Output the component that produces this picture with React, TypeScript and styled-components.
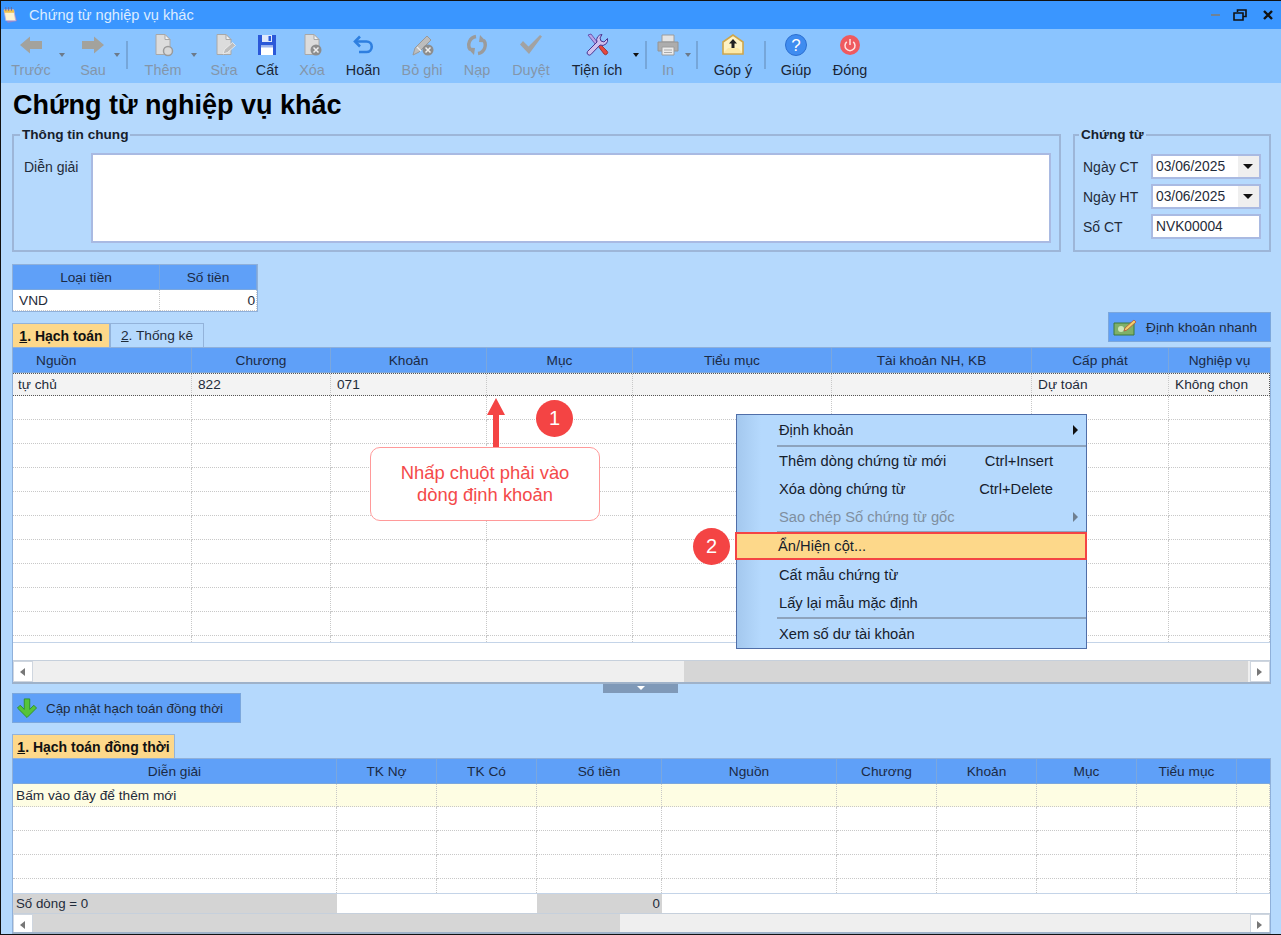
import { ReactNode } from "react";
import styled, { createGlobalStyle } from "styled-components";

const Global = createGlobalStyle`
  html, body { margin: 0; padding: 0; background: #fff; }
  body { font-family: "Liberation Sans", Arial, sans-serif; font-size: 14px; color: #1f2b3a; }
`;

const Window = styled.div`
  position: relative;
  width: 1281px;
  height: 935px;
  box-sizing: border-box;
  border-top: 1px solid #111;
  border-left: 1px solid #111;
  border-bottom: 1px solid #111;
  display: flex;
  flex-direction: column;
  overflow: hidden;
  background: #b5d9fd;
`;

const TitleBar = styled.div`
  height: 28px;
  background: #3a96ff;
  display: flex;
  align-items: center;
  padding: 0 0 0 2px;
  flex: none;
`;

const TitleText = styled.span`
  margin-left: 11px;
  color: #dcecff;
  font-size: 14.6px;
`;

const WinControls = styled.div`
  margin-left: auto;
  display: flex;
  align-items: center;
  margin-right: 8px;
  gap: 13px;
  svg:last-child { margin-left: 3px; }
`;

const Toolbar = styled.div`
  height: 54px;
  flex: none;
  background: #8ac4ff;
  display: flex;
  padding-left: 6px;
`;

const ToolItem = styled.div<{ $w: number; $ml?: number; $off?: boolean }>`
  width: ${(p) => p.$w}px;
  margin-left: ${(p) => p.$ml || 0}px;
  flex: none;
  display: flex;
  flex-direction: column;
  align-items: center;
  padding-top: 4px;
  color: ${(p) => (p.$off ? "#8496aa" : "#1a2636")};
  white-space: nowrap;
  font-size: 14.4px;
  svg { display: block; }
`;

const ToolLabel = styled.span`
  margin-top: 5px;
  line-height: 16px;
`;

const Caret = styled.div<{ $w: number; $ml?: number; $off?: boolean }>`
  width: ${(p) => p.$w}px;
  margin-left: ${(p) => p.$ml || 0}px;
  flex: none;
  position: relative;
  &::after {
    content: "";
    position: absolute;
    left: 50%;
    top: 24px;
    margin-left: -3px;
    border-left: 3.5px solid transparent;
    border-right: 3.5px solid transparent;
    border-top: 4px solid ${(p) => (p.$off ? "#6c7a8a" : "#111")};
  }
`;

const ToolSep = styled.div<{ $w: number }>`
  width: ${(p) => p.$w}px;
  flex: none;
  display: flex;
  justify-content: center;
  padding-top: 12px;
  &::after {
    content: "";
    width: 2px;
    height: 28px;
    background: #76a6d9;
  }
`;

const Content = styled.div`
  flex: 1;
  min-height: 0;
  display: flex;
  flex-direction: column;
  padding: 0 10px 0 11px;
`;

const Heading = styled.h1`
  margin: 0;
  height: 44px;
  line-height: 44px;
  font-size: 27px;
  font-weight: 700;
  color: #000;
  padding-left: 1px;
  white-space: nowrap;
`;

const GroupRow = styled.div`
  display: flex;
  gap: 12px;
  height: 125px;
  flex: none;
`;

const Group = styled.fieldset<{ $w: number; $lg: number }>`
  width: ${(p) => p.$w}px;
  box-sizing: border-box;
  margin: 0;
  padding: 0;
  border: 2px solid #9db6d8;
  flex: none;
  legend {
    margin-left: ${(p) => p.$lg}px;
    padding: 0 2px;
    font-weight: 700;
    font-size: 13.6px;
    line-height: 16px;
    color: #16202c;
  }
`;

const GeneralBody = styled.div`
  display: flex;
  padding: 10px 8px 0 10px;
`;

const FieldLabel = styled.span`
  width: 67px;
  flex: none;
  line-height: 28px;
`;

const Memo = styled.div`
  flex: 1;
  height: 90px;
  box-sizing: border-box;
  background: #fff;
  border: 2px solid #a9bae2;
`;

const VoucherBody = styled.div`
  display: grid;
  grid-template-columns: 68px 110px;
  row-gap: 5px;
  padding: 11px 0 0 8px;
  align-items: center;
`;

const FieldBox = styled.div`
  height: 25px;
  box-sizing: border-box;
  background: #fff;
  border: 2px solid #a9bae2;
  display: flex;
  align-items: center;
  padding-left: 3px;
  font-size: 13.8px;
  span { flex: 1; }
`;

const DropZone = styled.div`
  width: 21px;
  align-self: stretch;
  background: #efefef;
  position: relative;
  &::after {
    content: "";
    position: absolute;
    left: 5px;
    top: 8px;
    border-left: 5px solid transparent;
    border-right: 5px solid transparent;
    border-top: 5px solid #111;
  }
`;

const MoneyGrid = styled.div`
  margin-top: 12px;
  width: 246px;
  height: 48px;
  flex: none;
  box-sizing: border-box;
  border: 1px solid #8fb0da;
  background: #fff;
  display: grid;
  grid-template-columns: 147px 1fr;
  grid-template-rows: 25px 1fr;
  font-size: 13.7px;
`;

const HeadCell = styled.div<{ $pad?: number }>`
  background: #5fa0f8;
  border-right: 1px solid #7ba7dd;
  border-bottom: 1px solid #7ba7dd;
  display: flex;
  align-items: center;
  justify-content: ${(p) => (p.$pad ? "flex-start" : "center")};
  padding-left: ${(p) => p.$pad || 0}px;
  box-sizing: border-box;
  color: #1b2a45;
  white-space: nowrap;
  overflow: hidden;
`;

const Cell = styled.div<{ $right?: boolean; $pad?: number }>`
  border-right: 1px dotted #c8c8c8;
  border-bottom: 1px dotted #c8c8c8;
  box-sizing: border-box;
  padding: 0 ${(p) => (p.$right ? 1 : 0)}px 0 ${(p) => (p.$right ? 0 : p.$pad ?? 6)}px;
  display: flex;
  align-items: center;
  justify-content: ${(p) => (p.$right ? "flex-end" : "flex-start")};
  white-space: nowrap;
  overflow: hidden;
`;

const TabRow = styled.div<{ $h: number }>`
  height: ${(p) => p.$h}px;
  flex: none;
  display: flex;
  justify-content: space-between;
  align-items: flex-start;
  position: relative;
`;

const Tabs = styled.div`
  display: flex;
  align-self: flex-end;
`;

const Tab = styled.div<{ $active?: boolean; $w: number }>`
  width: ${(p) => p.$w}px;
  height: 24px;
  box-sizing: border-box;
  display: flex;
  align-items: center;
  justify-content: center;
  white-space: nowrap;
  font-size: ${(p) => (p.$active ? "14px" : "13.7px")};
  font-weight: ${(p) => (p.$active ? 700 : 400)};
  color: ${(p) => (p.$active ? "#111" : "#1f2b3a")};
  background: ${(p) => (p.$active ? "#fdd88a" : "#b5d9fd")};
  border: 1px solid #93b3da;
  border-bottom: none;
`;

const ActionButton = styled.div<{ $w: number; $fs: number }>`
  width: ${(p) => p.$w}px;
  height: 30px;
  box-sizing: border-box;
  background: #5fa0f8;
  border: 1px solid #7ba7dd;
  display: flex;
  align-items: center;
  padding-left: 4px;
  gap: 9px;
  white-space: nowrap;
  flex: none;
  font-size: ${(p) => p.$fs}px;
`;

const GridBox = styled.div<{ $fill?: boolean }>`
  ${(p) => (p.$fill ? "flex: 1; min-height: 0;" : "height: 337px; flex: none;")}
  box-sizing: border-box;
  border: 1px solid #8fb0da;
  border-bottom: 2px solid #9fb2c9;
  background: #fff;
  display: flex;
  flex-direction: column;
  overflow: hidden;
  font-size: 13.7px;
`;

const Columns = styled.div<{ $cols: string }>`
  display: grid;
  grid-template-columns: ${(p) => p.$cols};
  flex: none;
`;

const HeadRow = styled(Columns)`
  height: 25px;
  ${HeadCell}:last-child { border-right: none; }
`;

const Rows = styled.div<{ $h: number }>`
  height: ${(p) => p.$h}px;
  flex: none;
  overflow: hidden;
  border-bottom: 1px solid #c4d4e8;
  box-sizing: content-box;
`;

const DataRow = styled(Columns)<{ $h: number; $bg?: string; $focus?: boolean }>`
  height: ${(p) => p.$h}px;
  background: ${(p) => p.$bg || "#fff"};
  ${(p) => p.$focus && "border: 1px dotted #555; border-left: none; box-sizing: border-box;"}
  ${Cell} { ${(p) => p.$focus && "border-bottom: none;"} }
  ${Cell}:last-child { ${(p) => p.$focus && "border-right: none;"} }
`;

const Gap = styled.div`
  flex: 1;
  min-height: 0;
  background: #fff;
`;

const Scrollbar = styled.div<{ $h: number }>`
  height: ${(p) => p.$h}px;
  flex: none;
  display: flex;
  background: #efefef;
  border-top: 1px solid #c6d0dc;
`;

const ScrollButton = styled.div<{ $right?: boolean }>`
  width: 20px;
  flex: none;
  background: #fff;
  border: 1px solid #cfd6df;
  box-sizing: border-box;
  position: relative;
  &::after {
    content: "";
    position: absolute;
    top: 6px;
    left: 6px;
    border-top: 4px solid transparent;
    border-bottom: 4px solid transparent;
    ${(p) => (p.$right ? "border-left: 5px solid #777;" : "border-right: 5px solid #777;")}
  }
`;

const ScrollSpace = styled.div<{ $w: number; $thumb?: boolean }>`
  ${(p) => (p.$w ? `width: ${p.$w}px; flex: none;` : "flex: 1;")}
  background: ${(p) => (p.$thumb ? "#d6d6d6" : "#efefef")};
`;

const Splitter = styled.div`
  height: 9px;
  flex: none;
  display: flex;
  justify-content: center;
`;

const SplitHandle = styled.div`
  width: 75px;
  height: 9px;
  margin-right: 2px;
  background: #7f99b8;
  position: relative;
  &::after {
    content: "";
    position: absolute;
    left: 34px;
    top: 2px;
    border-left: 4px solid transparent;
    border-right: 4px solid transparent;
    border-top: 4px solid #fff;
  }
`;

const FooterRow = styled(Columns)`
  height: 19px;
  font-size: 13.3px;
`;

const FootCell = styled.div<{ $gray?: boolean; $right?: boolean }>`
  background: ${(p) => (p.$gray ? "#d4d4d4" : "#fff")};
  display: flex;
  align-items: center;
  justify-content: ${(p) => (p.$right ? "flex-end" : "flex-start")};
  padding: 0 2px 0 3px;
`;

const Menu = styled.div`
  position: absolute;
  left: 735px;
  top: 413px;
  width: 351px;
  box-sizing: border-box;
  border: 1px solid #506ea8;
  background: linear-gradient(90deg, #a4c8ee, #b5d9fd 24px);
  color: #16202c;
  font-size: 14.7px;
  display: flex;
  flex-direction: column;
`;

const MenuItem = styled.div<{ $h: number; $off?: boolean; $hot?: boolean }>`
  height: ${(p) => p.$h}px;
  flex: none;
  display: flex;
  align-items: center;
  padding: 0 33px 0 42px;
  color: ${(p) => (p.$off ? "#7f8fa0" : "inherit")};
  position: relative;
  ${(p) => p.$hot && "background: #fdd88a; outline: 2px solid #f44444; outline-offset: -1px; margin: 0 0 2px -1px;"}
  b { margin-left: auto; font-weight: 400; }
`;

const MenuArrow = styled.i<{ $off?: boolean }>`
  position: absolute;
  right: 8px;
  top: 50%;
  margin-top: -5px;
  border-top: 5px solid transparent;
  border-bottom: 5px solid transparent;
  border-left: 5px solid ${(p) => (p.$off ? "#6f7f90" : "#111")};
`;

const MenuSep = styled.div`
  height: 2px;
  flex: none;
  margin-left: 40px;
  background: #8da3bd;
`;

const Badge = styled.div<{ $x: number; $y: number }>`
  position: absolute;
  left: ${(p) => p.$x}px;
  top: ${(p) => p.$y}px;
  width: 37px;
  height: 37px;
  border-radius: 50%;
  background: #f44444;
  color: #fff;
  font-size: 20px;
  display: flex;
  align-items: center;
  justify-content: center;
`;

const Callout = styled.div`
  position: absolute;
  left: 369px;
  top: 446px;
  width: 230px;
  height: 74px;
  box-sizing: border-box;
  background: #fff;
  border: 1px solid #ff9a9a;
  border-radius: 10px;
  color: #f44a4a;
  font-size: 18.4px;
  line-height: 22px;
  text-align: center;
  padding-top: 14px;
`;

const UpArrow = styled.svg`
  position: absolute;
  left: 485px;
  top: 396px;
`;

const Doc = () => (
  <>
    <path d="M5 1.5h9l5 5v15H5z" fill="#dcdcdc" stroke="#a8a8a8" />
    <path d="M14 1.5v5h5z" fill="#f2f2f2" stroke="#a8a8a8" />
  </>
);

const CrossCircle = ({ cx, cy }: { cx: number; cy: number }) => (
  <>
    <circle cx={cx} cy={cy} r="5.5" fill="#8d8d8d" />
    <path d={`M${cx - 2.5} ${cy - 2.5}l5 5m0-5l-5 5`} stroke="#eee" strokeWidth="1.5" />
  </>
);

const icons: Record<string, ReactNode> = {
  prev: <path d="M1 12l10-8.5V8h12v8H11v4.5z" fill="#a3a29c" />,
  next: <path d="M23 12l-10-8.5V8H1v8h12v4.5z" fill="#a3a29c" />,
  add: (
    <>
      <Doc />
      <circle cx="17" cy="18" r="4.5" fill="#d8d8d8" stroke="#9a9a9a" strokeWidth="1.5" />
    </>
  ),
  edit: (
    <>
      <Doc />
      <path d="M11 21l1.5-4.5 8-7 3 3-8 7z" fill="#bdbdbd" stroke="#f0f0f0" strokeWidth=".8" />
    </>
  ),
  save: (
    <>
      <path d="M3 2h18v20H3z" fill="#2b58d8" />
      <path d="M7 2h10v7H7z" fill="#dfe9fb" />
      <path d="M13.5 3h2.5v5h-2.5z" fill="#2b58d8" />
      <path d="M6 12.5h12V22H6z" fill="#fff" />
      <path d="M6 12.5h12v2H6z" fill="#9db5ee" />
    </>
  ),
  del: (
    <>
      <Doc />
      <CrossCircle cx={16} cy={17} />
    </>
  ),
  undo: (
    <>
      <path d="M9 3.5L4 8.5l5 5" fill="none" stroke="#2e7fe0" strokeWidth="2.6" />
      <path d="M5 8.5h10.5a5.2 5.2 0 0 1 0 10.5H8" fill="none" stroke="#2e7fe0" strokeWidth="2.6" />
    </>
  ),
  discard: (
    <>
      <path d="M3 22l2-7L17 3l4 4L9 19z" fill="#bdbdbd" stroke="#999" />
      <path d="M7 14l4 4" stroke="#eee" strokeWidth="1.2" />
      <CrossCircle cx={18} cy={17} />
    </>
  ),
  reload: (
    <>
      <path d="M11 3.5A8.5 8.5 0 0 0 5.5 17" fill="none" stroke="#9b9b9b" strokeWidth="3.4" />
      <path d="M13 20.5A8.5 8.5 0 0 0 18.5 7" fill="none" stroke="#9b9b9b" strokeWidth="3.4" />
      <path d="M2 14.5l8 .5-1 7zM22 9.5l-8-.5 1-7z" fill="#9b9b9b" />
    </>
  ),
  check: <path d="M1 11.5l3-3.5 5.5 5.5L21 2l2 1.5L10 21z" fill="#a2a2a2" />,
  tools: (
    <>
      <path d="M3 2l3-1 7 9-2 2z" fill="#b9a3e6" stroke="#5c3fa0" strokeWidth=".8" />
      <path d="M13 13l2-2 7 7a2 2 0 0 1-3 3z" fill="#e5483f" stroke="#8f2a2a" strokeWidth=".8" />
      <path d="M17 1.5a5.5 5.5 0 0 0-5 7.5L2.5 18.5a2.3 2.3 0 0 0 3.2 3.2L15 12a5.5 5.5 0 0 0 7.5-6.5L19 9l-3-1-1-3z" fill="#cfc0ee" stroke="#4a3490" strokeWidth="1" />
    </>
  ),
  print: (
    <>
      <path d="M6 2h12v7H6z" fill="#e4e4e4" stroke="#9c9c9c" />
      <path d="M2 9h20v9H2z" fill="#adadad" stroke="#949494" />
      <path d="M6 14h12v8H6z" fill="#ececec" stroke="#9c9c9c" />
      <path d="M8 17h8M8 19.5h8" stroke="#aaa" />
    </>
  ),
  feedback: (
    <>
      <path d="M2 9l10-7 10 7v12H2z" fill="#fff3c4" stroke="#cfa64a" strokeWidth="1.6" />
      <path d="M3 20h18V19l-4-4H7l-4 4z" fill="#fde9a6" />
      <path d="M12 6l-4 4.5h2.5V15h3v-4.5H16z" fill="#222" />
    </>
  ),
  help: (
    <>
      <circle cx="12" cy="12" r="10.5" fill="#3f8cf0" stroke="#2c6fd0" />
      <text x="12" y="18" textAnchor="middle" fontSize="17" fill="#fff" fontFamily="Liberation Sans">?</text>
    </>
  ),
  power: (
    <>
      <circle cx="12" cy="12" r="10" fill="#ef5a5f" />
      <path d="M8.8 8.8a5 5 0 1 0 6.4 0" fill="none" stroke="#ffe3e3" strokeWidth="1.5" />
      <path d="M12 6v6" stroke="#ffe3e3" strokeWidth="1.5" />
    </>
  ),
};

const ToolIcon = ({ name }: { name: string }) => (
  <svg width="24" height="24" viewBox="0 0 24 24">
    {icons[name]}
  </svg>
);

type Part =
  | { kind: "tool"; label: string; icon: string; w: number; ml?: number; off?: boolean }
  | { kind: "caret"; w: number; ml?: number; off?: boolean }
  | { kind: "sep"; w: number };

const parts: Part[] = [
  { kind: "tool", label: "Trước", icon: "prev", w: 48, off: true },
  { kind: "caret", w: 10, ml: 2, off: true },
  { kind: "tool", label: "Sau", icon: "next", w: 40, ml: 6, off: true },
  { kind: "caret", w: 8, off: true },
  { kind: "sep", w: 12 },
  { kind: "tool", label: "Thêm", icon: "add", w: 52, ml: 4, off: true },
  { kind: "caret", w: 10, off: true },
  { kind: "tool", label: "Sửa", icon: "edit", w: 48, ml: 1, off: true },
  { kind: "tool", label: "Cất", icon: "save", w: 38 },
  { kind: "tool", label: "Xóa", icon: "del", w: 52, off: true },
  { kind: "tool", label: "Hoãn", icon: "undo", w: 50 },
  { kind: "tool", label: "Bỏ ghi", icon: "discard", w: 68, off: true },
  { kind: "tool", label: "Nạp", icon: "reload", w: 42, off: true },
  { kind: "tool", label: "Duyệt", icon: "check", w: 66, off: true },
  { kind: "tool", label: "Tiện ích", icon: "tools", w: 66 },
  { kind: "caret", w: 12 },
  { kind: "sep", w: 8 },
  { kind: "tool", label: "In", icon: "print", w: 32, ml: 2, off: true },
  { kind: "caret", w: 8, off: true },
  { kind: "sep", w: 10 },
  { kind: "tool", label: "Góp ý", icon: "feedback", w: 62 },
  { kind: "sep", w: 2 },
  { kind: "tool", label: "Giúp", icon: "help", w: 60 },
  { kind: "tool", label: "Đóng", icon: "power", w: 48 },
];

const topCols = "179px 139px 156px 146px 199px 200px 137px 101px";
const topHeads = ["Nguồn", "Chương", "Khoản", "Mục", "Tiểu mục", "Tài khoản NH, KB", "Cấp phát", "Nghiệp vụ"];
const topRow = ["tự chủ", "822", "071", "", "", "", "Dự toán", "Không chọn"];

const lowCols = "324px 100px 100px 125px 175px 100px 100px 100px 100px 33px";
const lowHeads = ["Diễn giải", "TK Nợ", "TK Có", "Số tiền", "Nguồn", "Chương", "Khoản", "Mục", "Tiểu mục", ""];

const blank = (n: number) => Array.from({ length: n }, (_, i) => i);

const App = () => {
  return (
    <Window>
      <Global />
      <TitleBar>
        <svg width="15" height="18" viewBox="0 0 16 19">
          <path d="M1 5l10-2 4 13-10 2z" fill="#8f86cf" />
          <path d="M1 4h10.5l2 11.5H3z" fill="#fbf3d0" stroke="#b7aee0" strokeWidth=".8" />
          <path d="M1 4h10.5l.5 3H1.5z" fill="#edc14f" />
          <path d="M3 1v4M6 1v4M9 1v4" stroke="#6a6a9a" />
        </svg>
        <TitleText>Chứng từ nghiệp vụ khác</TitleText>
        <WinControls>
          <svg width="9" height="4" viewBox="0 0 9 4">
            <path d="M0 1h9v2H0z" fill="#6e8296" />
          </svg>
          <svg width="14" height="12" viewBox="0 0 14 12">
            <path d="M4.5 3V1h8.5v6.5h-3" fill="none" stroke="#111" strokeWidth="1.6" />
            <path d="M1 4h9v7H1z" fill="none" stroke="#111" strokeWidth="1.6" />
          </svg>
          <svg width="10" height="10" viewBox="0 0 10 10">
            <path d="M1 1l8 8m0-8l-8 8" stroke="#111" strokeWidth="2.4" />
          </svg>
        </WinControls>
      </TitleBar>
      <Toolbar>
        {parts.map((p, i) => {
          if (p.kind === "caret") return <Caret key={i} $w={p.w} $ml={p.ml} $off={p.off} />;
          if (p.kind === "sep") return <ToolSep key={i} $w={p.w} />;
          return (
            <ToolItem key={i} $w={p.w} $ml={p.ml} $off={p.off}>
              <ToolIcon name={p.icon} />
              <ToolLabel>{p.label}</ToolLabel>
            </ToolItem>
          );
        })}
      </Toolbar>
      <Content>
        <Heading>Chứng từ nghiệp vụ khác</Heading>
        <GroupRow>
          <Group $w={1049} $lg={6}>
            <legend>Thông tin chung</legend>
            <GeneralBody>
              <FieldLabel>Diễn giải</FieldLabel>
              <Memo />
            </GeneralBody>
          </Group>
          <Group $w={198} $lg={4}>
            <legend>Chứng từ</legend>
            <VoucherBody>
              <span>Ngày CT</span>
              <FieldBox>
                <span>03/06/2025</span>
                <DropZone />
              </FieldBox>
              <span>Ngày HT</span>
              <FieldBox>
                <span>03/06/2025</span>
                <DropZone />
              </FieldBox>
              <span>Số CT</span>
              <FieldBox>
                <span>NVK00004</span>
              </FieldBox>
            </VoucherBody>
          </Group>
        </GroupRow>
        <MoneyGrid>
          <HeadCell>Loại tiền</HeadCell>
          <HeadCell>Số tiền</HeadCell>
          <Cell>VND</Cell>
          <Cell $right>0</Cell>
        </MoneyGrid>
        <TabRow $h={35}>
          <Tabs>
            <Tab $active $w={98}>
              <span>
                <u>1</u>. Hạch toán
              </span>
            </Tab>
            <Tab $w={94}>
              <span>
                <u>2</u>. Thống kê
              </span>
            </Tab>
          </Tabs>
          <ActionButton $w={163} $fs={13.7}>
            <svg width="24" height="20" viewBox="0 0 24 20">
              <path d="M1 6h20v12H1z" fill="#7fb069" stroke="#3f7a3a" />
              <circle cx="8" cy="12" r="3" fill="#cfe6b8" />
              <path d="M11 14l1-3 9-8 2 2-9 8z" fill="#f3cf6a" stroke="#b5533c" strokeWidth=".8" />
            </svg>
            <span>Định khoản nhanh</span>
          </ActionButton>
        </TabRow>
        <GridBox>
          <HeadRow $cols={topCols}>
            {topHeads.map((h, i) => (
              <HeadCell key={h} $pad={i === 0 ? 23 : 0}>{h}</HeadCell>
            ))}
          </HeadRow>
          <Rows $h={269}>
            <DataRow $cols={topCols} $h={23} $bg="#f3f3f3" $focus>
              {topRow.map((c, i) => (
                <Cell key={i} $pad={i === 0 ? 5 : 6}>{c}</Cell>
              ))}
            </DataRow>
            {blank(11).map((r) => (
              <DataRow key={r} $cols={topCols} $h={24}>
                {topHeads.map((h) => (
                  <Cell key={h} />
                ))}
              </DataRow>
            ))}
          </Rows>
          <Gap />
          <Scrollbar $h={21}>
            <ScrollButton />
            <ScrollSpace $w={651} />
            <ScrollSpace $w={564} $thumb />
            <ScrollSpace $w={0} />
            <ScrollButton $right />
          </Scrollbar>
        </GridBox>
        <Splitter>
          <SplitHandle />
        </Splitter>
        <ActionButton $w={229} $fs={13.4}>
          <svg width="20" height="22" viewBox="0 0 22 24">
            <path d="M8 2h6v11.5l4.5-4.5 3 3L11 22.5.5 12l3-3L8 13.5z" fill="#56c43a" stroke="#2f8f25" />
          </svg>
          <span>Cập nhật hạch toán đồng thời</span>
        </ActionButton>
        <TabRow $h={35}>
          <Tabs>
            <Tab $active $w={163}>
              <span>
                <u>1</u>. Hạch toán đồng thời
              </span>
            </Tab>
          </Tabs>
        </TabRow>
        <GridBox $fill>
          <HeadRow $cols={lowCols}>
            {lowHeads.map((h, i) => (
              <HeadCell key={i}>{h}</HeadCell>
            ))}
          </HeadRow>
          <Rows $h={109}>
            <DataRow $cols={lowCols} $h={23} $bg="#fefde3">
              {lowHeads.map((_, i) => (
                <Cell key={i} $pad={3}>{i === 0 ? "Bấm vào đây để thêm mới" : ""}</Cell>
              ))}
            </DataRow>
            {blank(4).map((r) => (
              <DataRow key={r} $cols={lowCols} $h={24}>
                {lowHeads.map((_, i) => (
                  <Cell key={i} />
                ))}
              </DataRow>
            ))}
          </Rows>
          <FooterRow $cols="324px 200px 125px 1fr">
            <FootCell $gray>Số dòng = 0</FootCell>
            <FootCell />
            <FootCell $gray $right>0</FootCell>
            <FootCell />
          </FooterRow>
          <Scrollbar $h={22}>
            <ScrollButton />
            <ScrollSpace $w={587} $thumb />
            <ScrollSpace $w={0} />
            <ScrollButton $right />
          </Scrollbar>
        </GridBox>
      </Content>

      <UpArrow width="20" height="52" viewBox="0 0 20 52">
        <path d="M10 1l9 17h-6v33H7V18H1z" fill="#f44444" />
      </UpArrow>
      <Callout>
        Nhấp chuột phải vào
        <br />
        dòng định khoản
      </Callout>
      <Badge $x={535} $y={399}>1</Badge>
      <Menu>
        <MenuItem $h={30}>
          Định khoản
          <MenuArrow />
        </MenuItem>
        <MenuSep />
        <MenuItem $h={28}>
          Thêm dòng chứng từ mới<b>Ctrl+Insert</b>
        </MenuItem>
        <MenuItem $h={28}>
          Xóa dòng chứng từ<b>Ctrl+Delete</b>
        </MenuItem>
        <MenuItem $h={28} $off>
          Sao chép Số chứng từ gốc
          <MenuArrow $off />
        </MenuItem>
        <MenuSep />
        <MenuItem $h={26} $hot>Ẩn/Hiện cột...</MenuItem>
        <MenuItem $h={28}>Cất mẫu chứng từ</MenuItem>
        <MenuItem $h={28}>Lấy lại mẫu mặc định</MenuItem>
        <MenuSep />
        <MenuItem $h={29}>Xem số dư tài khoản</MenuItem>
      </Menu>
      <Badge $x={692} $y={527}>2</Badge>
    </Window>
  );
};

export default App;
